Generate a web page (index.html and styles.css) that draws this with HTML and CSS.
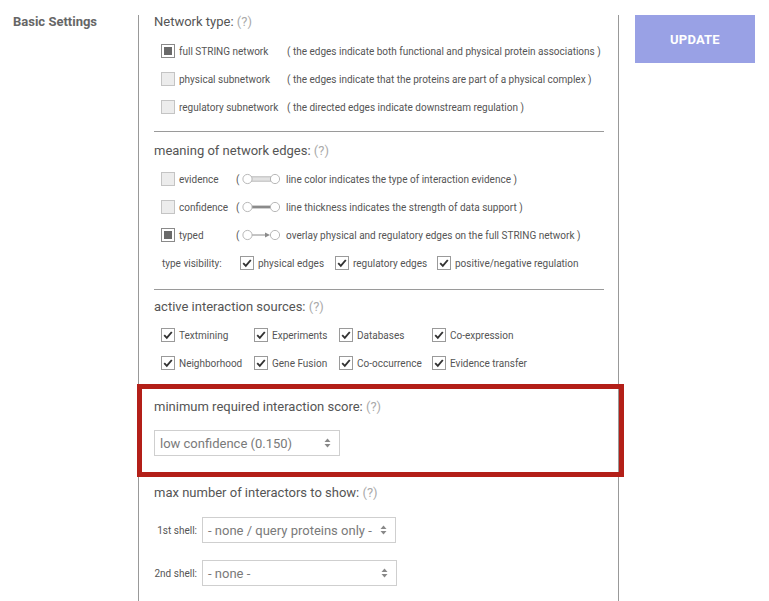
FILE: index.html
```html
<!DOCTYPE html>
<html lang="en">
<head>
<meta charset="utf-8">
<title>Basic Settings</title>
<link rel="stylesheet" href="styles.css">
</head>
<body>
<div class="page">
  <div class="side">Basic Settings</div>
  <div class="panel">
    <!-- Network type -->
    <div class="sec sec1">
      <h3 class="heading">Network type: <span class="q">(?)</span></h3>
      <div class="rows">
        <div class="row"><span class="box box-on"></span><span class="lbl lbl-net">full STRING network</span><span class="desc">( the edges indicate both functional and physical protein associations )</span></div>
        <div class="row"><span class="box"></span><span class="lbl lbl-net">physical subnetwork</span><span class="desc">( the edges indicate that the proteins are part of a physical complex )</span></div>
        <div class="row"><span class="box"></span><span class="lbl lbl-net">regulatory subnetwork</span><span class="desc">( the directed edges indicate downstream regulation )</span></div>
      </div>
      <div class="sep sep1"></div>
    </div>

    <!-- meaning of edges -->
    <div class="sec sec2">
      <h3 class="heading">meaning of network edges: <span class="q">(?)</span></h3>
      <div class="rows">
        <div class="row"><span class="box"></span><span class="lbl lbl-edge">evidence</span><span class="paren">(</span>
          <svg class="edge" width="40" height="12" viewBox="0 0 40 12"><rect x="9.5" y="3.8" width="19" height="4.4" fill="#e2e2e2" stroke="#b5b5b5" stroke-width="0.9"/><circle cx="5.5" cy="6" r="4.6" fill="#fff" stroke="#b0b0b0" stroke-width="0.9"/><circle cx="33" cy="6" r="4.6" fill="#fff" stroke="#b0b0b0" stroke-width="0.9"/></svg>
          <span class="desc">line color indicates the type of interaction evidence )</span></div>
        <div class="row"><span class="box"></span><span class="lbl lbl-edge">confidence</span><span class="paren">(</span>
          <svg class="edge" width="40" height="12" viewBox="0 0 40 12"><rect x="9.5" y="4.6" width="19" height="2.8" fill="#8a8a8a"/><circle cx="5.5" cy="6" r="4.6" fill="#fff" stroke="#b0b0b0" stroke-width="0.9"/><circle cx="33" cy="6" r="4.6" fill="#fff" stroke="#b0b0b0" stroke-width="0.9"/></svg>
          <span class="desc">line thickness indicates the strength of data support )</span></div>
        <div class="row"><span class="box box-on"></span><span class="lbl lbl-edge">typed</span><span class="paren">(</span>
          <svg class="edge" width="40" height="12" viewBox="0 0 40 12"><line x1="10" y1="6" x2="24" y2="6" stroke="#8a8a8a" stroke-width="1"/><polygon points="23,3.6 28,6 23,8.4" fill="#8a8a8a"/><circle cx="5.5" cy="6" r="4.6" fill="#fff" stroke="#b0b0b0" stroke-width="0.9"/><circle cx="33" cy="6" r="4.6" fill="#fff" stroke="#b0b0b0" stroke-width="0.9"/></svg>
          <span class="desc">overlay physical and regulatory edges on the full STRING network )</span></div>
        <div class="row vis">
          <span class="vis-title">type visibility:</span>
          <span class="vis-item vis-a"><span class="chk"><svg width="12" height="12" viewBox="0 0 12 12"><path d="M2.2 6.2 L4.8 8.8 L9.8 3" fill="none" stroke="#333" stroke-width="1.9"/></svg></span><span class="lbl">physical edges</span></span>
          <span class="vis-item vis-b"><span class="chk"><svg width="12" height="12" viewBox="0 0 12 12"><path d="M2.2 6.2 L4.8 8.8 L9.8 3" fill="none" stroke="#333" stroke-width="1.9"/></svg></span><span class="lbl">regulatory edges</span></span>
          <span class="vis-item"><span class="chk"><svg width="12" height="12" viewBox="0 0 12 12"><path d="M2.2 6.2 L4.8 8.8 L9.8 3" fill="none" stroke="#333" stroke-width="1.9"/></svg></span><span class="lbl">positive/negative regulation</span></span>
        </div>
      </div>
      <div class="sep sep2"></div>
    </div>

    <!-- sources -->
    <div class="sec sec3">
      <h3 class="heading">active interaction sources: <span class="q">(?)</span></h3>
      <div class="grid">
        <span class="gitem"><span class="chk"><svg width="12" height="12" viewBox="0 0 12 12"><path d="M2.2 6.2 L4.8 8.8 L9.8 3" fill="none" stroke="#333" stroke-width="1.9"/></svg></span><span class="lbl">Textmining</span></span>
        <span class="gitem"><span class="chk"><svg width="12" height="12" viewBox="0 0 12 12"><path d="M2.2 6.2 L4.8 8.8 L9.8 3" fill="none" stroke="#333" stroke-width="1.9"/></svg></span><span class="lbl">Experiments</span></span>
        <span class="gitem"><span class="chk"><svg width="12" height="12" viewBox="0 0 12 12"><path d="M2.2 6.2 L4.8 8.8 L9.8 3" fill="none" stroke="#333" stroke-width="1.9"/></svg></span><span class="lbl">Databases</span></span>
        <span class="gitem"><span class="chk"><svg width="12" height="12" viewBox="0 0 12 12"><path d="M2.2 6.2 L4.8 8.8 L9.8 3" fill="none" stroke="#333" stroke-width="1.9"/></svg></span><span class="lbl">Co-expression</span></span>
        <span class="gitem"><span class="chk"><svg width="12" height="12" viewBox="0 0 12 12"><path d="M2.2 6.2 L4.8 8.8 L9.8 3" fill="none" stroke="#333" stroke-width="1.9"/></svg></span><span class="lbl">Neighborhood</span></span>
        <span class="gitem"><span class="chk"><svg width="12" height="12" viewBox="0 0 12 12"><path d="M2.2 6.2 L4.8 8.8 L9.8 3" fill="none" stroke="#333" stroke-width="1.9"/></svg></span><span class="lbl">Gene Fusion</span></span>
        <span class="gitem"><span class="chk"><svg width="12" height="12" viewBox="0 0 12 12"><path d="M2.2 6.2 L4.8 8.8 L9.8 3" fill="none" stroke="#333" stroke-width="1.9"/></svg></span><span class="lbl">Co-occurrence</span></span>
        <span class="gitem"><span class="chk"><svg width="12" height="12" viewBox="0 0 12 12"><path d="M2.2 6.2 L4.8 8.8 L9.8 3" fill="none" stroke="#333" stroke-width="1.9"/></svg></span><span class="lbl">Evidence transfer</span></span>
      </div>
    </div>

    <!-- score (highlighted) -->
    <div class="sec sec4">
      <div class="highlight"></div>
      <h3 class="heading">minimum required interaction score: <span class="q">(?)</span></h3>
      <div class="select sel-score"><span>low confidence (0.150)</span>
        <svg class="arrows" width="7" height="10" viewBox="0 0 7 10"><polygon points="0.5,4 3.5,0.5 6.5,4" fill="#888"/><polygon points="0.5,6 3.5,9.5 6.5,6" fill="#888"/></svg></div>
    </div>

    <!-- interactors -->
    <div class="sec sec5">
      <h3 class="heading">max number of interactors to show: <span class="q">(?)</span></h3>
      <div class="shell shell1"><span class="shell-lbl">1st shell:</span>
        <div class="select sel-shell"><span>- none / query proteins only -</span>
          <svg class="arrows" width="7" height="10" viewBox="0 0 7 10"><polygon points="0.5,4 3.5,0.5 6.5,4" fill="#888"/><polygon points="0.5,6 3.5,9.5 6.5,6" fill="#888"/></svg></div>
      </div>
      <div class="shell shell2"><span class="shell-lbl">2nd shell:</span>
        <div class="select sel-shell2"><span>- none -</span>
          <svg class="arrows" width="7" height="10" viewBox="0 0 7 10"><polygon points="0.5,4 3.5,0.5 6.5,4" fill="#888"/><polygon points="0.5,6 3.5,9.5 6.5,6" fill="#888"/></svg></div>
      </div>
    </div>
  </div>
  <div class="btn-col"><button class="update">UPDATE</button></div>
</div>
</body>
</html>
```

FILE: styles.css
```css
html, body {
  margin: 0;
  padding: 0;
  background: #fff;
}
body {
  font-family: Roboto, "Liberation Sans", Arial, sans-serif;
  color: #555;
  width: 769px;
  height: 601px;
  overflow: hidden;
}
.page {
  display: flex;
  align-items: flex-start;
  padding-top: 15px;
}
.side {
  width: 125px;
  padding-left: 13px;
  font-size: 13px;
  font-weight: 700;
  color: #666;
  line-height: 16px;
  margin-top: -1px;
}
.panel {
  width: 450px;
  border-left: 1px solid #999;
  border-right: 1px solid #999;
  padding: 0 14px 0 15px;
  height: 600px;
}
.btn-col {
  margin-left: 16px;
}
.update {
  width: 120px;
  height: 48px;
  border: none;
  background: #99a1e5;
  color: #fff;
  font-family: Roboto, "Liberation Sans", Arial, sans-serif;
  font-weight: 700;
  font-size: 13px;
  letter-spacing: 0.2px;
  padding: 0;
}
.heading {
  margin: 0;
  font-size: 13px;
  font-weight: 400;
  line-height: 16px;
  color: #555;
}
.q {
  color: #aaa;
}
.sec1 .heading { margin-top: -1px; }
.rows {
  margin-top: 7px;
}
.sec2 .heading { margin-top: 11px; }
.sec2 .rows { margin-top: 6px; }
.sec3 .heading { margin-top: 9px; }
.row {
  display: flex;
  align-items: center;
  height: 28px;
  font-size: 10px;
}
.box {
  width: 12px;
  height: 12px;
  border: 1px solid #c4c4c4;
  background: #ececec;
  margin-left: 7px;
  flex: none;
  box-sizing: content-box;
  position: relative;
}
.box-on {
  background: #fff;
  border-color: #8a8a8a;
}
.box-on::after {
  content: "";
  position: absolute;
  left: 2px;
  top: 2px;
  width: 8px;
  height: 8px;
  background: #6a6a6a;
}
.lbl {
  margin-left: 4px;
  color: #555;
  font-size: 10px;
  white-space: nowrap;
}
.lbl-net {
  width: 108px;
  flex: none;
}
.lbl-edge {
  width: 57px;
  flex: none;
}
.desc {
  color: #555;
  white-space: nowrap;
}
.paren {
  color: #555;
  width: 5px;
}
.edge {
  margin-left: 1px;
  margin-right: 4px;
  flex: none;
}
.sep {
  height: 0;
  border-top: 1px solid #9a9a9a;
}
.sep1 { margin-top: 10px; }
.sep2 { margin-top: 12px; }
.vis-title {
  margin-left: 8px;
  width: 78px;
  flex: none;
}
.vis-item {
  display: flex;
  align-items: center;
  flex: none;
}
.vis-a { width: 95px; }
.vis-b { width: 102px; }
.chk {
  width: 12px;
  height: 12px;
  border: 1px solid #9a9a9a;
  background: #fff;
  display: flex;
  align-items: center;
  justify-content: center;
  flex: none;
}
.chk svg { display: block; }
.grid {
  margin-top: 6px;
  padding-left: 7px;
  display: grid;
  grid-template-columns: 93px 85px 93px auto;
  grid-auto-rows: 28px;
  font-size: 10px;
}
.gitem {
  display: flex;
  align-items: center;
}
.sec4 {
  position: relative;
  margin-top: 12px;
  padding-top: 10px;
  padding-bottom: 16px;
}
.highlight {
  position: absolute;
  top: -5px;
  bottom: -5px;
  left: -17px;
  right: -20px;
  border: 5px solid #b31f18;
  pointer-events: none;
}
.select {
  height: 24px;
  border: 1px solid #cfcfcf;
  background: #fff;
  display: flex;
  align-items: center;
  justify-content: space-between;
  font-size: 13px;
  color: #7a7a7a;
  padding: 0 8px 0 5px;
  white-space: nowrap;
}
.sel-score {
  margin-top: 15px;
  width: 171px;
}
.sec5 {
  margin-top: 5px;
  padding-top: 8px;
}
.shell {
  display: flex;
  align-items: center;
}
.shell1 { margin-top: 16px; }
.shell2 { margin-top: 17px; }
.shell-lbl {
  width: 43px;
  text-align: right;
  margin-right: 5px;
  font-size: 10px;
  color: #555;
}
.sel-shell {
  width: 179px;
}
.sel-shell2 {
  width: 180px;
}
.arrows {
  flex: none;
  display: block;
}
```
